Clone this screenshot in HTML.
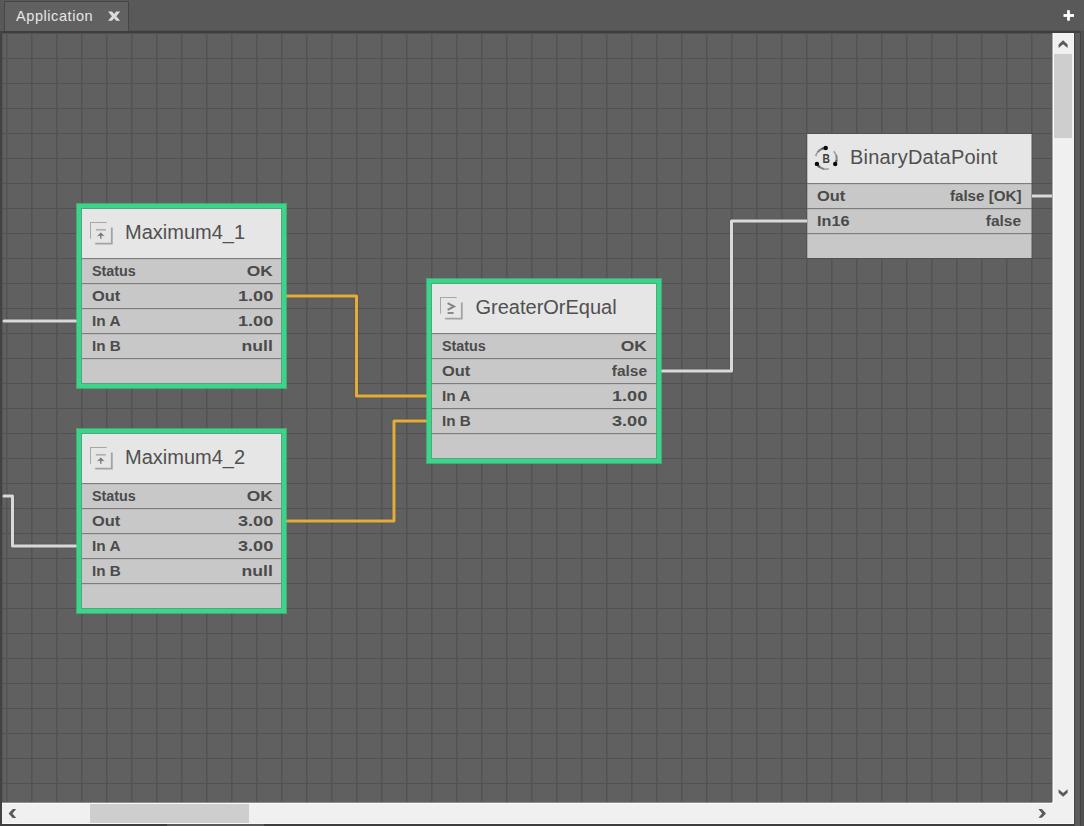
<!DOCTYPE html>
<html><head><meta charset="utf-8">
<style>
html,body{margin:0;padding:0;}
body{width:1084px;height:826px;position:relative;overflow:hidden;background:#595959;font-family:"Liberation Sans",sans-serif;}
.abs{position:absolute;}
#tab{left:4px;top:1px;width:123px;height:31px;background:#616161;border:1px solid #454545;border-bottom:none;}
#tabtxt{left:16px;top:8px;font-size:14.5px;letter-spacing:0.57px;color:#e6e6e6;white-space:pre;}
#tabx{left:108px;top:10px;width:13px;height:12px;}
#topline{left:0;top:31px;width:1081px;height:2px;background:#3e3e3e;}
#topline0{left:129px;top:30px;width:951px;height:1px;background:#515151;}
#canvas{left:2px;top:33px;width:1050px;height:770px;background-color:#606060;
  background-image:linear-gradient(to bottom,#515151 1px,transparent 1px),linear-gradient(to right,#535353 1px,#595959 1px,#595959 2px,transparent 2px);
  background-size:25px 25px;background-position:4px 0px;}
#leftb{left:0;top:31px;width:2px;height:795px;background:#424242;}
#leftb2{left:2px;top:33px;width:1px;height:769px;background:#555;}
#rstrip0{left:1074px;top:33px;width:1px;height:793px;background:#444;}
#rstrip{left:1075px;top:33px;width:5px;height:793px;background:#5b5b5b;}
#rstrip1{left:1080px;top:31px;width:1px;height:795px;background:#414141;}
#rstrip2{left:1081px;top:31px;width:3px;height:795px;background:#505050;}
#botline{left:0;top:824px;width:1074px;height:2px;background:#3e3e3e;}
#botlight{left:167px;top:824px;width:97px;height:2px;background:#585858;}
#vscroll{left:1052px;top:33px;width:22px;height:770px;background:#f0f0f0;}
#vscroll:before{content:"";position:absolute;left:0;top:0;width:1px;height:100%;background:#a8a8a8;}
#vscroll:after{content:"";position:absolute;left:1px;top:0;width:1px;height:100%;background:#fbfbfb;}
#vthumb{left:1054px;top:54px;width:18px;height:84px;background:#cecece;}
#hscroll{left:2px;top:802px;width:1072px;height:22px;background:#f0f0f0;}
#hscroll:before{content:"";position:absolute;left:0;top:0;width:1050px;height:1px;background:#8c8c8c;}
#hscroll:after{content:"";position:absolute;left:0;top:1px;width:1051px;height:1px;background:#fbfbfb;}
#hthumb{left:90px;top:804px;width:159px;height:19px;background:#cecece;}
#vsr{left:1073px;top:33px;width:1px;height:791px;background:#f6f6f6;}
#hsb{left:2px;top:823px;width:1072px;height:1px;background:#f8f8f8;}

.node{position:absolute;}
.green{background:#3ad588;}
.green0{background:rgba(58,213,136,0.6);}
.ginner{background:#52a57c;}
.content{position:absolute;background:#c8c8c8;overflow:hidden;}
.hdr{position:absolute;left:0;top:0;right:0;height:49px;background:#e6e6e6;}
.sep{position:absolute;left:0;right:0;height:1px;background:#7d7d7d;border-bottom:1px solid #bdbdbd;}
.title{position:absolute;top:12px;font-size:20px;color:#505050;white-space:pre;}
.t{position:absolute;font-size:14.5px;font-weight:bold;color:#4b4b4b;white-space:pre;line-height:normal;}
.t span{display:inline-block;}
svg{position:absolute;left:0;top:0;}
</style></head>
<body>
<div id="tab" class="abs"></div>
<div id="tabtxt" class="abs">Application</div>
<svg class="abs" width="1084" height="40" style="left:0;top:0"><polygon fill="#dcdcdc" points="108,11.6 112,11.6 114.1,14.1 116.2,11.6 120.2,11.6 116.3,16.2 120.2,20.8 116.2,20.8 114.1,18.3 112,20.8 108,20.8 111.9,16.2"/></svg>
<svg class="abs" width="12" height="12" style="left:1063px;top:10px"><rect x="0.5" y="4.1" width="10.5" height="2.8" fill="#fff"/><rect x="4.1" y="0.2" width="2.8" height="10.5" fill="#fff"/></svg>
<div id="topline0" class="abs"></div>
<div id="topline" class="abs"></div>
<div id="canvas" class="abs"></div>
<div id="leftb" class="abs"></div>
<div id="leftb2" class="abs"></div>
<div id="rstrip0" class="abs"></div>
<div id="rstrip" class="abs"></div>
<div id="rstrip1" class="abs"></div>
<div id="rstrip2" class="abs"></div>
<div id="botline" class="abs"></div>
<div id="botlight" class="abs"></div>
<div id="vscroll" class="abs"></div>
<div id="vthumb" class="abs"></div>
<div id="hscroll" class="abs"></div>
<div id="hthumb" class="abs"></div>
<div id="vsr" class="abs"></div>
<div id="hsb" class="abs"></div>

<svg class="abs" width="1052" height="803" style="left:0;top:0"><path d="M4 321 L76 321" stroke="#505050" stroke-opacity="0.35" stroke-width="5" fill="none" stroke-linejoin="round"/><path d="M4 321 L76 321" stroke="#d9d9d9" stroke-width="3" fill="none" stroke-linejoin="round" stroke-linecap="round"/><path d="M4 496 L12.5 496 L12.5 546 L76 546" stroke="#505050" stroke-opacity="0.35" stroke-width="5" fill="none" stroke-linejoin="round"/><path d="M4 496 L12.5 496 L12.5 546 L76 546" stroke="#d9d9d9" stroke-width="3" fill="none" stroke-linejoin="round" stroke-linecap="round"/><path d="M287 296 L356.5 296 L356.5 396 L426 396" stroke="#505050" stroke-opacity="0.35" stroke-width="5" fill="none" stroke-linejoin="round"/><path d="M287 296 L356.5 296 L356.5 396 L426 396" stroke="#e4ad38" stroke-width="3" fill="none" stroke-linejoin="round" stroke-linecap="round"/><path d="M287 521 L394 521 L394 421 L426 421" stroke="#505050" stroke-opacity="0.35" stroke-width="5" fill="none" stroke-linejoin="round"/><path d="M287 521 L394 521 L394 421 L426 421" stroke="#e4ad38" stroke-width="3" fill="none" stroke-linejoin="round" stroke-linecap="round"/><path d="M662 371 L731.5 371 L731.5 221 L807 221" stroke="#505050" stroke-opacity="0.35" stroke-width="5" fill="none" stroke-linejoin="round"/><path d="M662 371 L731.5 371 L731.5 221 L807 221" stroke="#d9d9d9" stroke-width="3" fill="none" stroke-linejoin="round" stroke-linecap="round"/><path d="M1032 196 L1052 196" stroke="#505050" stroke-opacity="0.35" stroke-width="5" fill="none" stroke-linejoin="round"/><path d="M1032 196 L1052 196" stroke="#d9d9d9" stroke-width="3" fill="none" stroke-linejoin="round" stroke-linecap="round"/></svg>
<div class="abs green0" style="left:76px;top:203px;width:211px;height:186px"></div>
<div class="abs green" style="left:77px;top:204px;width:209px;height:184px"></div>
<div class="abs ginner" style="left:81px;top:208px;width:201px;height:176px"></div>
<div class="content" style="left:82px;top:209px;width:199px;height:174px">
<div class="hdr"></div>
<svg style="left:7px;top:12px" width="26" height="26" viewBox="0 0 26 26">
<path d="M1 1.5H17.7M1.5 1V17.7" stroke="#a6a6a6" stroke-width="1" fill="none"/>
<path d="M6.2 22.6H22.8V6.6" stroke="#a2a2a2" stroke-width="1.8" fill="none"/>
<path d="M6.8 8.8H16.9" stroke="#b2b2b2" stroke-width="1.8"/>
<path d="M7.9 15.6L11.8 11.5L15.7 15.6L11.8 14.2Z" fill="#707070"/>
<path d="M11.8 13V17.8" stroke="#767676" stroke-width="1.4"/>
</svg>
<div class="title" style="left:43px">Maximum4_1</div>
<div class="sep" style="top:49px"></div>
<div class="sep" style="top:74px"></div>
<div class="sep" style="top:99px"></div>
<div class="sep" style="top:124px"></div>
<div class="sep" style="top:149px"></div>
</div>
<div class="t lbl" style="left:92px;top:263px"><span style="transform:scaleX(0.989);transform-origin:0 0">Status</span></div>
<div class="t val" style="left:-27px;width:300px;top:263px;text-align:right"><span style="transform:scaleX(1.197);transform-origin:100% 0">OK</span></div>
<div class="t lbl" style="left:92px;top:288px"><span style="transform:scaleX(1.133);transform-origin:0 0">Out</span></div>
<div class="t val" style="left:-27px;width:300px;top:288px;text-align:right"><span style="transform:scaleX(1.251);transform-origin:100% 0">1.00</span></div>
<div class="t lbl" style="left:92px;top:313px"><span style="transform:scaleX(1.062);transform-origin:0 0">In A</span></div>
<div class="t val" style="left:-27px;width:300px;top:313px;text-align:right"><span style="transform:scaleX(1.251);transform-origin:100% 0">1.00</span></div>
<div class="t lbl" style="left:92px;top:338px"><span style="transform:scaleX(1.050);transform-origin:0 0">In B</span></div>
<div class="t val" style="left:-27px;width:300px;top:338px;text-align:right"><span style="transform:scaleX(1.213);transform-origin:100% 0">null</span></div>
<div class="abs green0" style="left:76px;top:428px;width:211px;height:186px"></div>
<div class="abs green" style="left:77px;top:429px;width:209px;height:184px"></div>
<div class="abs ginner" style="left:81px;top:433px;width:201px;height:176px"></div>
<div class="content" style="left:82px;top:434px;width:199px;height:174px">
<div class="hdr"></div>
<svg style="left:7px;top:12px" width="26" height="26" viewBox="0 0 26 26">
<path d="M1 1.5H17.7M1.5 1V17.7" stroke="#a6a6a6" stroke-width="1" fill="none"/>
<path d="M6.2 22.6H22.8V6.6" stroke="#a2a2a2" stroke-width="1.8" fill="none"/>
<path d="M6.8 8.8H16.9" stroke="#b2b2b2" stroke-width="1.8"/>
<path d="M7.9 15.6L11.8 11.5L15.7 15.6L11.8 14.2Z" fill="#707070"/>
<path d="M11.8 13V17.8" stroke="#767676" stroke-width="1.4"/>
</svg>
<div class="title" style="left:43px">Maximum4_2</div>
<div class="sep" style="top:49px"></div>
<div class="sep" style="top:74px"></div>
<div class="sep" style="top:99px"></div>
<div class="sep" style="top:124px"></div>
<div class="sep" style="top:149px"></div>
</div>
<div class="t lbl" style="left:92px;top:488px"><span style="transform:scaleX(0.989);transform-origin:0 0">Status</span></div>
<div class="t val" style="left:-27px;width:300px;top:488px;text-align:right"><span style="transform:scaleX(1.197);transform-origin:100% 0">OK</span></div>
<div class="t lbl" style="left:92px;top:513px"><span style="transform:scaleX(1.133);transform-origin:0 0">Out</span></div>
<div class="t val" style="left:-27px;width:300px;top:513px;text-align:right"><span style="transform:scaleX(1.251);transform-origin:100% 0">3.00</span></div>
<div class="t lbl" style="left:92px;top:538px"><span style="transform:scaleX(1.062);transform-origin:0 0">In A</span></div>
<div class="t val" style="left:-27px;width:300px;top:538px;text-align:right"><span style="transform:scaleX(1.251);transform-origin:100% 0">3.00</span></div>
<div class="t lbl" style="left:92px;top:563px"><span style="transform:scaleX(1.050);transform-origin:0 0">In B</span></div>
<div class="t val" style="left:-27px;width:300px;top:563px;text-align:right"><span style="transform:scaleX(1.213);transform-origin:100% 0">null</span></div>
<div class="abs green0" style="left:426px;top:278px;width:236px;height:186px"></div>
<div class="abs green" style="left:427px;top:279px;width:234px;height:184px"></div>
<div class="abs ginner" style="left:431px;top:283px;width:226px;height:176px"></div>
<div class="content" style="left:432px;top:284px;width:224px;height:174px">
<div class="hdr"></div>
<svg style="left:7px;top:12px" width="26" height="26" viewBox="0 0 26 26">
<path d="M1 1.5H17.7M1.5 1V17.7" stroke="#a6a6a6" stroke-width="1" fill="none"/>
<path d="M6.2 22.6H22.8V6.6" stroke="#a2a2a2" stroke-width="1.8" fill="none"/>
<path d="M8.6 7.2L15 10.5L8.6 13.8" stroke="#858585" stroke-width="2" fill="none"/>
<path d="M8.6 17H14.6" stroke="#8a8a8a" stroke-width="2"/>
</svg>
<div class="title" style="left:43.5px">GreaterOrEqual</div>
<div class="sep" style="top:49px"></div>
<div class="sep" style="top:74px"></div>
<div class="sep" style="top:99px"></div>
<div class="sep" style="top:124px"></div>
<div class="sep" style="top:149px"></div>
</div>
<div class="t lbl" style="left:442px;top:338px"><span style="transform:scaleX(0.989);transform-origin:0 0">Status</span></div>
<div class="t val" style="left:347px;width:300px;top:338px;text-align:right"><span style="transform:scaleX(1.197);transform-origin:100% 0">OK</span></div>
<div class="t lbl" style="left:442px;top:363px"><span style="transform:scaleX(1.133);transform-origin:0 0">Out</span></div>
<div class="t val" style="left:347px;width:300px;top:363px;text-align:right"><span style="transform:scaleX(1.068);transform-origin:100% 0">false</span></div>
<div class="t lbl" style="left:442px;top:388px"><span style="transform:scaleX(1.062);transform-origin:0 0">In A</span></div>
<div class="t val" style="left:347px;width:300px;top:388px;text-align:right"><span style="transform:scaleX(1.251);transform-origin:100% 0">1.00</span></div>
<div class="t lbl" style="left:442px;top:413px"><span style="transform:scaleX(1.050);transform-origin:0 0">In B</span></div>
<div class="t val" style="left:347px;width:300px;top:413px;text-align:right"><span style="transform:scaleX(1.251);transform-origin:100% 0">3.00</span></div>
<div class="content" style="left:807px;top:134px;width:225px;height:124px">
<div class="hdr"></div>
<svg style="left:0px;top:0px" width="40" height="49" viewBox="0 0 40 49"><path d="M18.73 14.01A10.6 10.6 0 0 0 14.29 15.16" stroke="#5a5a5a" stroke-opacity="0.95" stroke-width="2.30" fill="none"/><path d="M14.29 15.16A10.6 10.6 0 0 0 10.75 18.07" stroke="#5a5a5a" stroke-opacity="0.73" stroke-width="1.95" fill="none"/><path d="M10.75 18.07A10.6 10.6 0 0 0 8.77 22.22" stroke="#5a5a5a" stroke-opacity="0.51" stroke-width="1.60" fill="none"/><circle cx="18.73" cy="14.01" r="2.2" fill="#0a0a0a"/><path d="M28.19 30.06A10.6 10.6 0 0 0 29.64 25.71" stroke="#5a5a5a" stroke-opacity="0.95" stroke-width="2.30" fill="none"/><path d="M29.64 25.71A10.6 10.6 0 0 0 29.12 21.15" stroke="#5a5a5a" stroke-opacity="0.73" stroke-width="1.95" fill="none"/><path d="M29.12 21.15A10.6 10.6 0 0 0 26.73 17.24" stroke="#5a5a5a" stroke-opacity="0.51" stroke-width="1.60" fill="none"/><circle cx="28.19" cy="30.06" r="2.2" fill="#0a0a0a"/><path d="M9.92 29.90A10.6 10.6 0 0 0 13.02 33.28" stroke="#5a5a5a" stroke-opacity="0.95" stroke-width="2.30" fill="none"/><path d="M13.02 33.28A10.6 10.6 0 0 0 17.26 35.04" stroke="#5a5a5a" stroke-opacity="0.73" stroke-width="1.95" fill="none"/><path d="M17.26 35.04A10.6 10.6 0 0 0 21.84 34.84" stroke="#5a5a5a" stroke-opacity="0.51" stroke-width="1.60" fill="none"/><circle cx="9.92" cy="29.90" r="2.2" fill="#0a0a0a"/><g transform="translate(19.10,28.90) scale(0.82,1)"><text x="0" y="0" text-anchor="middle" font-family="Liberation Sans" font-weight="bold" font-size="12.5" fill="#3c3c3c">B</text></g></svg>
<div class="title" style="left:43px;letter-spacing:0.2px">BinaryDataPoint</div>
<div class="sep" style="top:49px"></div>
<div class="sep" style="top:74px"></div>
<div class="sep" style="top:99px"></div>
<div style="position:absolute;left:0;top:0;width:1px;height:124px;background:rgba(96,96,96,0.33)"></div>
<div style="position:absolute;right:0;top:0;width:1px;height:124px;background:rgba(96,96,96,0.55)"></div>
</div>
<div class="t lbl" style="left:817px;top:188px"><span style="transform:scaleX(1.133);transform-origin:0 0">Out</span></div>
<div class="t val" style="left:721.5px;width:300px;top:188px;text-align:right"><span style="transform:scaleX(1.045);transform-origin:100% 0">false [OK]</span></div>
<div class="t lbl" style="left:817px;top:213px"><span style="transform:scaleX(1.119);transform-origin:0 0">In16</span></div>
<div class="t val" style="left:721.5px;width:300px;top:213px;text-align:right"><span style="transform:scaleX(1.068);transform-origin:100% 0">false</span></div>

<!-- WIRES -->

<svg class="abs" width="1084" height="826" style="left:0;top:0">
<polygon fill="#5a5a5a" points="1063.1,40.3 1058.6,44.4 1058.6,47.9 1063.1,44.2 1067.6,47.9 1067.6,44.4"/>
<polygon fill="#5a5a5a" points="1063.1,796.8 1058.6,792.7 1058.6,789.2 1063.1,792.9 1067.6,789.2 1067.6,792.7"/>
<polygon fill="#5a5a5a" points="8.6,813.5 12.7,809 16.2,809 12.5,813.5 16.2,818 12.7,818"/>
<polygon fill="#5a5a5a" points="1046,813.4 1041.9,809 1038.4,809 1042.1,813.4 1038.4,817.8 1041.9,817.8"/>
</svg>
</body></html>
